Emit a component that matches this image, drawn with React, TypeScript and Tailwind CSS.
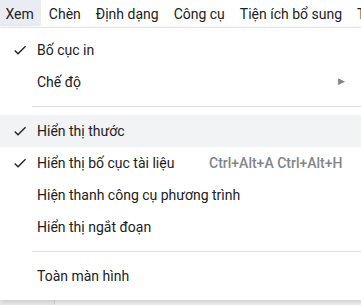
import React from "react";

const FONT = { fontFamily: "Roboto, 'Noto Sans', Arial, sans-serif" };

const TABS = ["Xem", "Chèn", "Định dạng", "Công cụ", "Tiện ích bổ sung", "Trợ giúp"];

type Item =
  | { kind: "item"; label: string; checked?: boolean; submenu?: boolean; shortcut?: string; hover?: boolean }
  | { kind: "sep" };

const ITEMS: Item[] = [
  { kind: "item", label: "Bố cục in", checked: true },
  { kind: "item", label: "Chế độ", submenu: true },
  { kind: "sep" },
  { kind: "item", label: "Hiển thị thước", checked: true, hover: true },
  { kind: "item", label: "Hiển thị bố cục tài liệu", checked: true, shortcut: "Ctrl+Alt+A Ctrl+Alt+H" },
  { kind: "item", label: "Hiện thanh công cụ phương trình" },
  { kind: "item", label: "Hiển thị ngắt đoạn" },
  { kind: "sep" },
  { kind: "item", label: "Toàn màn hình" },
];

function Check() {
  return (
    <svg width="16" height="16" viewBox="0 0 24 24" className="text-[#202124]">
      <path fill="currentColor" d="M9 16.17L4.83 12l-1.42 1.41L9 19 21 7l-1.41-1.41z" />
    </svg>
  );
}

export default function App() {
  return (
    <div className="relative flex h-[305px] w-[361px] flex-col overflow-hidden bg-[#f1f3f4]" style={FONT}>
      {/* menu bar */}
      <div className="flex h-[28px] shrink-0 items-start border-b border-[#eceef1] bg-white text-[14px] text-[#202124]">
        <div className="-ml-[2px] flex items-start whitespace-nowrap">
          {TABS.map((t, i) => (
            <span
              key={t}
              className={`flex h-[26px] items-center px-[7.5px] pt-[2px] ${i === 0 ? "rounded-b-[3px] bg-[#e9edf3]" : ""}`}
            >
              {t}
            </span>
          ))}
        </div>
      </div>

      {/* page behind the menu */}
      <div className="flex flex-1">
        <div className="w-[55px] border-r border-[#dadce0] bg-[#eeeff1]" />
        <div className="flex-1 bg-[#f3f4f6]" />
      </div>

      {/* dropdown */}
      <div className="absolute left-0 top-[28px] w-[390px] bg-white pb-[8px] pt-[6px] text-[14px] text-[#202124] shadow-[0_2px_6px_rgba(60,64,67,0.25)]">
        {ITEMS.map((it, i) =>
          it.kind === "sep" ? (
            <div key={i} className="flex h-[17px] items-center pl-[32px]">
              <div className="h-px w-full bg-[#dadce0]" />
            </div>
          ) : (
            <div
              key={i}
              className={`flex h-[32px] items-center whitespace-nowrap ${it.hover ? "bg-[#f1f3f4]" : ""}`}
            >
              <span className="flex w-[37px] shrink-0 items-center pl-[12px]">{it.checked && <Check />}</span>
              <span className="w-[172px] shrink-0">{it.label}</span>
              {it.shortcut && <span className="font-medium text-[#80868b]">{it.shortcut}</span>}
              {it.submenu && <span className="ml-[129px] text-[9px] text-[#80868b]">▶</span>}
            </div>
          ),
        )}
      </div>
    </div>
  );
}
